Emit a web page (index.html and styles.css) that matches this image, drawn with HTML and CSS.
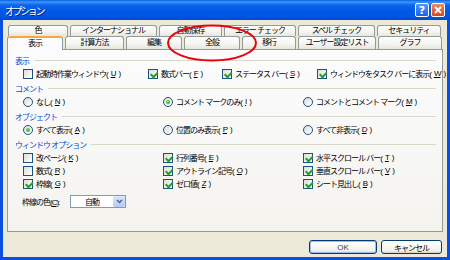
FILE: index.html
```html
<!DOCTYPE html>
<html>
<head>
  <title>オプション</title>
  <link rel="stylesheet" href="styles.css">
</head>
<body>
  <div class="window">
    <div class="titlebar">
      <span class="title">オプション</span>
      <div class="caption-btns">
        <span class="cap-btn help">?</span>
        <span class="cap-btn close">
          <svg width="8" height="8" viewBox="0 0 8 8"><path d="M1 1 L7 7 M7 1 L1 7" stroke="#fff" stroke-width="1.8"/></svg>
        </span>
      </div>
    </div>

    <div class="frame">
      <div class="tabs">
        <div class="tab-row back">
          <span class="tab">色</span>
          <span class="tab">インターナショナル</span>
          <span class="tab">自動保存</span>
          <span class="tab">エラー チェック</span>
          <span class="tab">スペル チェック</span>
          <span class="tab">セキュリティ</span>
        </div>
        <div class="tab-row front">
          <span class="tab active">表示</span>
          <span class="tab">計算方法</span>
          <span class="tab">編集</span>
          <span class="tab">全般</span>
          <span class="tab">移行</span>
          <span class="tab">ユーザー設定リスト</span>
          <span class="tab">グラフ</span>
        </div>
      </div>

      <div class="panel">
        <div class="group-title">表示</div>
        <div class="opts view">
          <label class="opt"><span class="box"></span>起動時作業ウィンドウ(<u>U</u>)</label>
          <label class="opt"><span class="box on"></span>数式バー(<u>F</u>)</label>
          <label class="opt"><span class="box on"></span>ステータス バー(<u>S</u>)</label>
          <label class="opt"><span class="box on"></span>ウィンドウをタスク バーに表示(<u>W</u>)</label>
        </div>

        <div class="group-title">コメント</div>
        <div class="opts three">
          <label class="opt"><span class="box radio"></span>なし(<u>N</u>)</label>
          <label class="opt"><span class="box radio on"></span>コメント マークのみ(<u>I</u>)</label>
          <label class="opt"><span class="box radio"></span>コメントとコメント マーク(<u>M</u>)</label>
        </div>

        <div class="group-title">オブジェクト</div>
        <div class="opts three">
          <label class="opt"><span class="box radio on"></span>すべて表示(<u>A</u>)</label>
          <label class="opt"><span class="box radio"></span>位置のみ表示(<u>P</u>)</label>
          <label class="opt"><span class="box radio"></span>すべて非表示(<u>D</u>)</label>
        </div>

        <div class="group-title spaced">ウィンドウ オプション</div>
        <div class="opts three">
          <label class="opt"><span class="box"></span>改ページ(<u>K</u>)</label>
          <label class="opt"><span class="box on"></span>行列番号(<u>E</u>)</label>
          <label class="opt"><span class="box on"></span>水平スクロール バー(<u>T</u>)</label>
          <label class="opt"><span class="box"></span>数式(<u>R</u>)</label>
          <label class="opt"><span class="box on"></span>アウトライン記号(<u>O</u>)</label>
          <label class="opt"><span class="box on"></span>垂直スクロール バー(<u>V</u>)</label>
          <label class="opt"><span class="box on"></span>枠線(<u>G</u>)</label>
          <label class="opt"><span class="box on"></span>ゼロ値(<u>Z</u>)</label>
          <label class="opt"><span class="box on"></span>シート見出し(<u>B</u>)</label>
        </div>

        <div class="color-row">
          <span class="color-label">枠線の色(<u>C</u>):</span>
          <div class="select">
            <span class="val">自動</span>
            <span class="arrow">
              <svg width="7" height="5" viewBox="0 0 7 5"><path d="M1 1 L3.5 3.5 L6 1" stroke="#4D6185" stroke-width="1.5" fill="none"/></svg>
            </span>
          </div>
        </div>
      </div>

      <div class="buttons">
        <button class="btn default">OK</button>
        <button class="btn cancel">キャンセル</button>
      </div>
    </div>

    <svg class="mark" width="450" height="260" viewBox="0 0 450 260">
      <ellipse cx="212" cy="43" rx="44" ry="17.5" fill="none" stroke="#E8000B" stroke-width="2"/>
    </svg>
  </div>
</body>
</html>
```

FILE: styles.css
```css
body {
  margin: 0;
  font-family: "Liberation Sans", "Noto Sans CJK JP", sans-serif;
  font-size: 8px;
  letter-spacing: -1px;
  text-autospace: no-autospace;
  color: #000;
}
.window {
  position: relative;
  width: 450px;
  height: 260px;
  display: flex;
  flex-direction: column;
  background: #0A50E0;
  overflow: hidden;
}
.titlebar {
  height: 20px;
  flex: none;
  display: flex;
  align-items: center;
  justify-content: space-between;
  padding: 0 5px 0 5px;
  background: linear-gradient(#0A5FD8 0%, #3D95FF 10%, #0A66EC 25%, #0058E6 55%, #0055E5 85%, #0148C9 100%);
  color: #fff;
}
.title {
  font-size: 10px;
  letter-spacing: -2.4px;
  text-shadow: 1px 1px #0A1883;
}
.caption-btns {
  display: flex;
  gap: 2px;
}
.cap-btn {
  width: 14px;
  height: 14px;
  box-sizing: border-box;
  border: 1px solid #fff;
  border-radius: 2px;
  display: flex;
  align-items: center;
  justify-content: center;
  letter-spacing: 0;
}
.help {
  background: linear-gradient(#4C9AFF, #1F5DE3);
  color: #fff;
  font: bold 11px "DejaVu Sans", sans-serif;
}
.close {
  background: linear-gradient(#EE8A62, #D5471F);
}
.frame {
  flex: 1;
  display: flex;
  flex-direction: column;
  margin: 0 3px 3px;
  padding: 5px 4px 0;
  background: #ECE9D8;
}
.tabs {
  margin-left: 1px;
}
.tab-row {
  display: flex;
  gap: 2px;
}
.tab-row.back {
  height: 11px;
}
.tab-row.front {
  height: 13px;
}
.tab {
  box-sizing: border-box;
  height: 100%;
  border: 1px solid #919B9C;
  border-bottom: none;
  border-radius: 3px 3px 0 0;
  background: linear-gradient(#FFFFFF, #F4F4F0 60%, #E6E6DE);
  display: flex;
  align-items: center;
  justify-content: center;
  line-height: 1;
  white-space: nowrap;
}
.back .tab:nth-child(1) { width: 60px; }
.back .tab:nth-child(2) { width: 87px; }
.back .tab:nth-child(3) { width: 63px; }
.back .tab:nth-child(4) { width: 72px; }
.back .tab:nth-child(5) { width: 77px; }
.back .tab:nth-child(6) { width: 64px; }
.front .tab:nth-child(1) { width: 56px; }
.front .tab:nth-child(2) { width: 59px; }
.front .tab:nth-child(3) { width: 56px; }
.front .tab:nth-child(4) { width: 56px; }
.front .tab:nth-child(5) { width: 54px; }
.front .tab:nth-child(6) { width: 78px; }
.front .tab:nth-child(7) { width: 64px; }
.tab.active {
  position: relative;
  z-index: 1;
  height: 14px;
  margin-left: -1px;
  background: #FCFCFE;
  border-top: 2px solid #F6A93A;
}
.panel {
  height: 183px;
  box-sizing: border-box;
  border: 1px solid #919B9C;
  background: linear-gradient(#FCFCFE, #F4F3EE);
  padding: 4px 6px 0 7px;
}
.group-title {
  display: flex;
  align-items: center;
  gap: 5px;
  height: 12px;
  margin-bottom: 1px;
  color: #0046D5;
}
.group-title::after {
  content: "";
  flex: 1;
  border-top: 1px solid #D8D8C8;
}
.group-title.spaced {
  margin-top: 1px;
}
.opts {
  display: grid;
  grid-auto-rows: 13px;
  margin: 0 0 2px 8px;
}
.opts.view {
  grid-template-columns: 125px 74px 95px auto;
}
.opts.three {
  grid-template-columns: 140px 140px auto;
}
.opt {
  display: flex;
  align-items: center;
  gap: 3px;
  white-space: nowrap;
}
.box {
  flex: none;
  width: 10px;
  height: 10px;
  box-sizing: border-box;
  border: 1px solid #1C5180;
  background: linear-gradient(135deg, #DCDCD7, #FFFFFF);
  display: flex;
}
.box.on::after {
  content: "";
  width: 5px;
  height: 3px;
  margin: 1px auto auto 1px;
  border-left: 2px solid #21A121;
  border-bottom: 2px solid #21A121;
  transform: rotate(-45deg) translate(0, 1px);
}
.radio {
  border-radius: 50%;
}
.radio.on::after {
  width: 4px;
  height: 4px;
  margin: auto;
  border: none;
  border-radius: 50%;
  background: radial-gradient(circle at 35% 35%, #6FE36A, #1E9B1E);
  transform: none;
}
.color-row {
  display: flex;
  align-items: center;
  gap: 2px;
  margin: 5px 0 0 7px;
}
.color-label {
  width: 46px;
  flex: none;
  white-space: nowrap;
}
.select {
  width: 56px;
  height: 13px;
  box-sizing: border-box;
  border: 1px solid #7F9DB9;
  background: #fff;
  display: flex;
}
.select .val {
  flex: 1;
  display: flex;
  align-items: center;
  justify-content: center;
}
.select .arrow {
  width: 12px;
  border-radius: 2px;
  background: linear-gradient(#DCE6FC, #B3C8F5);
  display: flex;
  align-items: center;
  justify-content: center;
}
.buttons {
  display: flex;
  justify-content: flex-end;
  gap: 4px;
  padding: 8px 1px 0 0;
}
.btn {
  height: 14px;
  box-sizing: border-box;
  border: 1px solid #003C74;
  border-radius: 3px;
  background: linear-gradient(#FFFFFF, #F2F2EC 80%, #D6D0C5);
  font: inherit;
  letter-spacing: inherit;
  color: #000;
  padding: 0;
  display: flex;
  align-items: center;
  justify-content: center;
}
.btn.default {
  width: 68px;
  box-shadow: inset 0 0 0 1px #9DBBEE;
  color: #444;
  letter-spacing: 0;
}
.btn.cancel {
  width: 61px;
}
.mark {
  position: absolute;
  left: 0;
  top: 0;
  pointer-events: none;
}
```
